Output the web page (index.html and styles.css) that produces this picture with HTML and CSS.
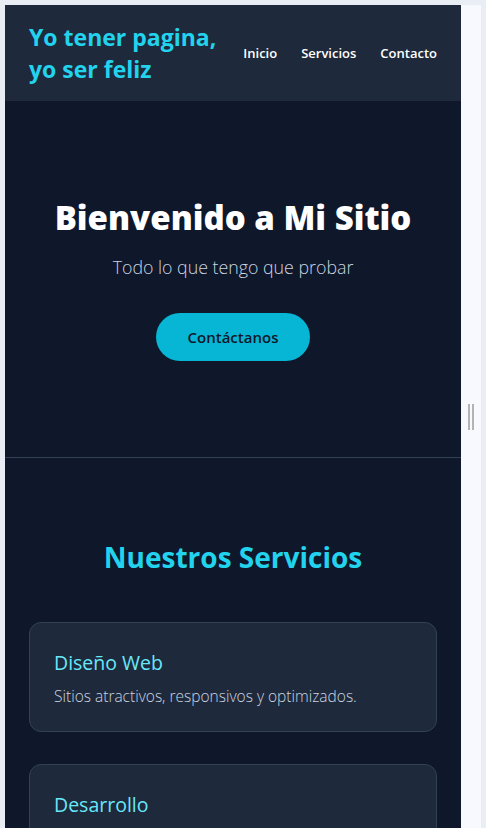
FILE: index.html
```html
<!DOCTYPE html>
<html lang="es">
<head>
<meta charset="utf-8">
<title>Mi Sitio</title>
<link rel="stylesheet" href="styles.css">
</head>
<body>
<div class="workspace">
  <div class="frame">
    <header class="site-header">
      <div class="logo">Yo tener pagina,<br>yo ser feliz</div>
      <nav class="nav">
        <a href="#">Inicio</a>
        <a href="#">Servicios</a>
        <a href="#">Contacto</a>
      </nav>
    </header>
    <section class="hero">
      <h1>Bienvenido a Mi Sitio</h1>
      <p class="lead">Todo lo que tengo que probar</p>
      <a class="btn" href="#">Contáctanos</a>
    </section>
    <section class="services">
      <h2>Nuestros Servicios</h2>
      <div class="cards">
        <div class="card">
          <h3>Diseño Web</h3>
          <p>Sitios atractivos, responsivos y optimizados.</p>
        </div>
        <div class="card">
          <h3>Desarrollo</h3>
          <p>Aplicaciones a medida para tu negocio.</p>
        </div>
      </div>
    </section>
  </div>
  <div class="resizer">
    <span class="grip"></span>
    <span class="grip"></span>
  </div>
</div>
</body>
</html>
```
FILE: styles.css
```css
html, body {
  margin: 0;
  padding: 0;
  height: 100%;
}
body {
  background: #e9edf4;
  font-family: "Open Sans", "Noto Sans", sans-serif;
  overflow: hidden;
}
.workspace {
  display: flex;
  padding: 5px 5px 0 5px;
  height: 100vh;
  box-sizing: border-box;
}
.frame {
  width: 456px;
  flex: none;
  background: #0f172a;
  overflow: hidden;
}
.resizer {
  width: 20px;
  flex: none;
  background: #f8f9fe;
  display: flex;
  justify-content: center;
  align-items: center;
  gap: 2px;
}
.grip {
  width: 2px;
  height: 26px;
  background: #b3b3b3;
}
.site-header {
  background: #1e293b;
  display: flex;
  justify-content: space-between;
  align-items: center;
  padding: 16px 24px;
}
.logo {
  color: #22d3ee;
  font-weight: 700;
  font-size: 23px;
  line-height: 32px;
}
.nav {
  display: flex;
  gap: 24px;
}
.nav a {
  color: #ffffff;
  text-decoration: none;
  font-size: 13px;
  font-weight: 600;
}
.hero {
  text-align: center;
  padding: 97px 24px 96px;
  border-bottom: 1px solid #334155;
}
.hero h1 {
  margin: 0;
  color: #ffffff;
  font-size: 33px;
  font-weight: 800;
  line-height: 1.2;
}
.lead {
  margin: 17px 0 34px;
  color: #cbd5e1;
  font-size: 17.8px;
  font-weight: 300;
}
.btn {
  display: inline-block;
  background: #06b6d4;
  color: #0f172a;
  text-decoration: none;
  font-size: 15px;
  font-weight: 600;
  padding: 14px 32px;
  border-radius: 999px;
}
.services {
  padding: 80px 24px;
}
.services h2 {
  margin: 0 0 46px;
  text-align: center;
  color: #22d3ee;
  font-size: 28px;
  font-weight: 700;
}
.cards {
  display: flex;
  flex-direction: column;
  gap: 32px;
}
.card {
  background: #1e293b;
  border: 1px solid #334155;
  border-radius: 12px;
  padding: 24px;
}
.card h3 {
  margin: 2px 0 9px;
  color: #67e8f9;
  font-size: 19.5px;
  font-weight: 400;
}
.card p {
  margin: 0;
  color: #cbd5e1;
  font-size: 15.5px;
  font-weight: 300;
}
```
